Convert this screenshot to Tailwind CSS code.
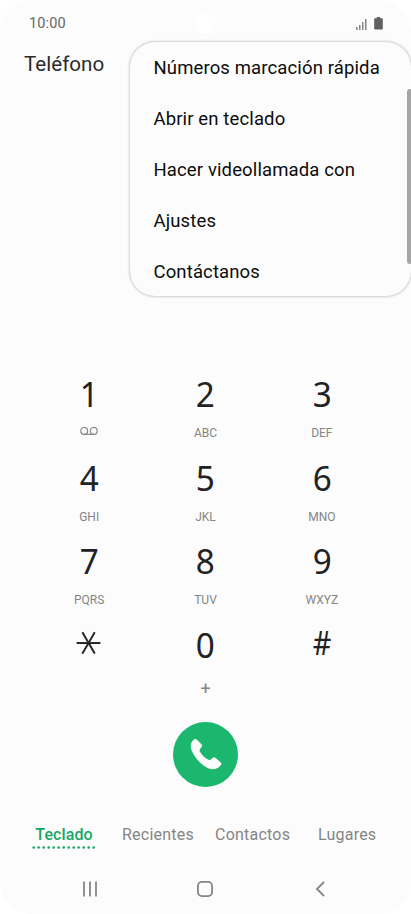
<!DOCTYPE html>
<html lang="es">
<head>
<meta charset="utf-8">
<meta name="viewport" content="width=device-width, initial-scale=1">
<title>Teléfono</title>
<script src="https://cdn.jsdelivr.net/npm/@tailwindcss/browser@4"></script>
</head>
<body class="bg-white font-[Roboto,sans-serif]">
<div class="relative flex h-[914px] w-[411px] flex-col overflow-hidden rounded-[32px] bg-[#fcfcfc]">
  <header class="flex h-[46px] items-center justify-between pl-[29px] pr-[28.500px] text-[#666]">
    <span class="pt-[2px] text-[14.5px] leading-none tracking-[0.15px]">10:00</span>
    <div class="flex items-end gap-[7px]">
      <svg class="h-[12px] w-[12px]" viewBox="0 0 12 12" fill="#858585"><path d="M1 9h1.5v3H1zM4 7h1.5v5H4zM7 4h1.5v8H7zM10 1h1.5v11H10z"/></svg>
      <svg class="h-[13px] w-[9px]" viewBox="0 0 9 13" fill="#606060"><path d="M2.8 0h3.4v1.3H8a.8.8 0 0 1 .8.8v9.500a.8.8 0 0 1-.8.8H1a.8.8 0 0 1-.8-.8V2.100a.8.8 0 0 1 .8-.8h1.800z"/></svg>
    </div>
  </header>
  <div class="absolute left-[195px] top-[13px] h-[21px] w-[21px] rounded-full bg-white"></div>
  <h1 class="h-[323px] pl-[24px] pt-[5px] text-[20.600px] leading-[27px] text-[#2b2b2b]">Teléfono</h1>

  <main class="grid grid-cols-3 px-[31px] text-center text-[35px] leading-[50px] text-[#222] font-['Noto_Sans',sans-serif]">
    <div class="h-[83.5px]"><div class="scale-x-95">1</div><svg class="mx-auto mt-[8px] h-[8px] w-[18px]" viewBox="0 0 18 8" fill="none" stroke="#858585" stroke-width="1.2"><circle cx="4.200" cy="3.900" r="3.400"/><circle cx="13.800" cy="3.900" r="3.400"/><path d="M4.200 7.300h9.600"/></svg></div>
    <div class="h-[83.5px]"><div class="scale-x-95">2</div><div class="mt-[6px] text-[12px] leading-[16px] text-[#858585] font-[Roboto,sans-serif]">ABC</div></div>
    <div class="h-[83.5px]"><div class="scale-x-95">3</div><div class="mt-[6px] text-[12px] leading-[16px] text-[#858585] font-[Roboto,sans-serif]">DEF</div></div>
    <div class="h-[83.5px]"><div class="scale-x-95">4</div><div class="mt-[6px] text-[12px] leading-[16px] text-[#858585] font-[Roboto,sans-serif]">GHI</div></div>
    <div class="h-[83.5px]"><div class="scale-x-95">5</div><div class="mt-[6px] text-[12px] leading-[16px] text-[#858585] font-[Roboto,sans-serif]">JKL</div></div>
    <div class="h-[83.5px]"><div class="scale-x-95">6</div><div class="mt-[6px] text-[12px] leading-[16px] text-[#858585] font-[Roboto,sans-serif]">MNO</div></div>
    <div class="h-[83.5px]"><div class="scale-x-95">7</div><div class="mt-[6px] text-[12px] leading-[16px] text-[#858585] font-[Roboto,sans-serif]">PQRS</div></div>
    <div class="h-[83.5px]"><div class="scale-x-95">8</div><div class="mt-[6px] text-[12px] leading-[16px] text-[#858585] font-[Roboto,sans-serif]">TUV</div></div>
    <div class="h-[83.5px]"><div class="scale-x-95">9</div><div class="mt-[6px] text-[12px] leading-[16px] text-[#858585] font-[Roboto,sans-serif]">WXYZ</div></div>
    <div class="h-[83.5px]"><div class="mx-auto h-[50px] w-[50px] -translate-x-[9px] -translate-y-[2px] rotate-90 text-[50px] font-extralight [-webkit-text-stroke:0.8px_#222] font-['DejaVu_Sans',sans-serif]">*</div></div>
    <div class="h-[83.5px]"><div class="scale-x-95">0</div><div class="mt-[11px] text-[18px] leading-[16px] text-[#858585] font-[Roboto,sans-serif]">+</div></div>
    <div class="h-[83.5px]"><div class="-translate-y-[2px] scale-x-90 text-[32px]">#</div></div>
  </main>

  <div class="mt-[18.500px] flex justify-center">
    <button class="flex h-[65px] w-[65px] items-center justify-center rounded-full bg-[#1bb76e]" aria-label="Llamar">
      <svg class="h-[32px] w-[32px]" viewBox="0 0 32 32" fill="#fcfcfc"><path d="M4.800 1.100Q6 .7 7 1.700L11.600 6.600Q12.700 7.900 11.500 9.200Q9 11.400 9.700 13.200C11.600 17 15.200 20.600 19.100 22C20.600 22.400 21.400 21 22.900 19.800Q24.300 18.800 25.600 20L30.800 24.600Q31.800 25.600 31 26.700C28.600 30.600 23.800 32.400 18.800 30.500C11.500 27.200 5.200 20.400 1.800 13C-.2 8.300.6 3.500 4.800 1.100Z"/></svg>
    </button>
  </div>

  <nav class="mt-[36.500px] flex h-[30px] pl-[32px] text-[16px] leading-[24px] tracking-[0.22px] text-[#858585]">
    <div class="w-[64px] text-center font-medium tracking-[0.1px] text-[#18a763]">Teclado
      <svg class="-mt-px block h-[3px] w-[64px]" viewBox="0 0 64 3"><path d="M1.700 1.500H63" stroke="#18a763" stroke-width="2.700" stroke-linecap="round" stroke-dasharray="0 5"/></svg>
    </div>
    <div class="ml-[26px] w-[93px]">Recientes</div>
    <div class="w-[103px]">Contactos</div>
    <div>Lugares</div>
  </nav>

  <footer class="mt-[27px] flex h-[18px] items-center pl-[82px] text-[#858585]">
    <svg class="h-[18px] w-[16px]" viewBox="0 0 16 18" fill="none" stroke="currentColor" stroke-width="1.800"><path d="M2 1.500v15M8 1.500v15M14 1.500v15"/></svg>
    <svg class="ml-[98px] h-[18px] w-[18px]" viewBox="0 0 18 18" fill="none" stroke="currentColor" stroke-width="1.800"><rect x="1.900" y="1.900" width="14.200" height="14.200" rx="4"/></svg>
    <svg class="ml-[100px] h-[18px] w-[12px]" viewBox="0 0 12 18" fill="none" stroke="currentColor" stroke-width="1.800"><path d="M10 2L3 9l7 7"/></svg>
  </footer>

  <div class="absolute left-[130px] top-[42px] h-[254px] w-[281px] rounded-[25px] bg-[#fcfcfc] pl-[23.500px] pt-px text-[18.500px] leading-[51px] tracking-[0.13px] text-[#0c0c0c] shadow-[0_0_3px_rgba(0,0,0,0.38)]">
    <div>Números marcación rápida</div>
    <div>Abrir en teclado</div>
    <div>Hacer videollamada con</div>
    <div>Ajustes</div>
    <div>Contáctanos</div>
  </div>
  <div class="absolute left-[407px] top-[89px] h-[175px] w-[8px] rounded-[3px] bg-[#a5a5a5]"></div>
</div>
</body>
</html>
